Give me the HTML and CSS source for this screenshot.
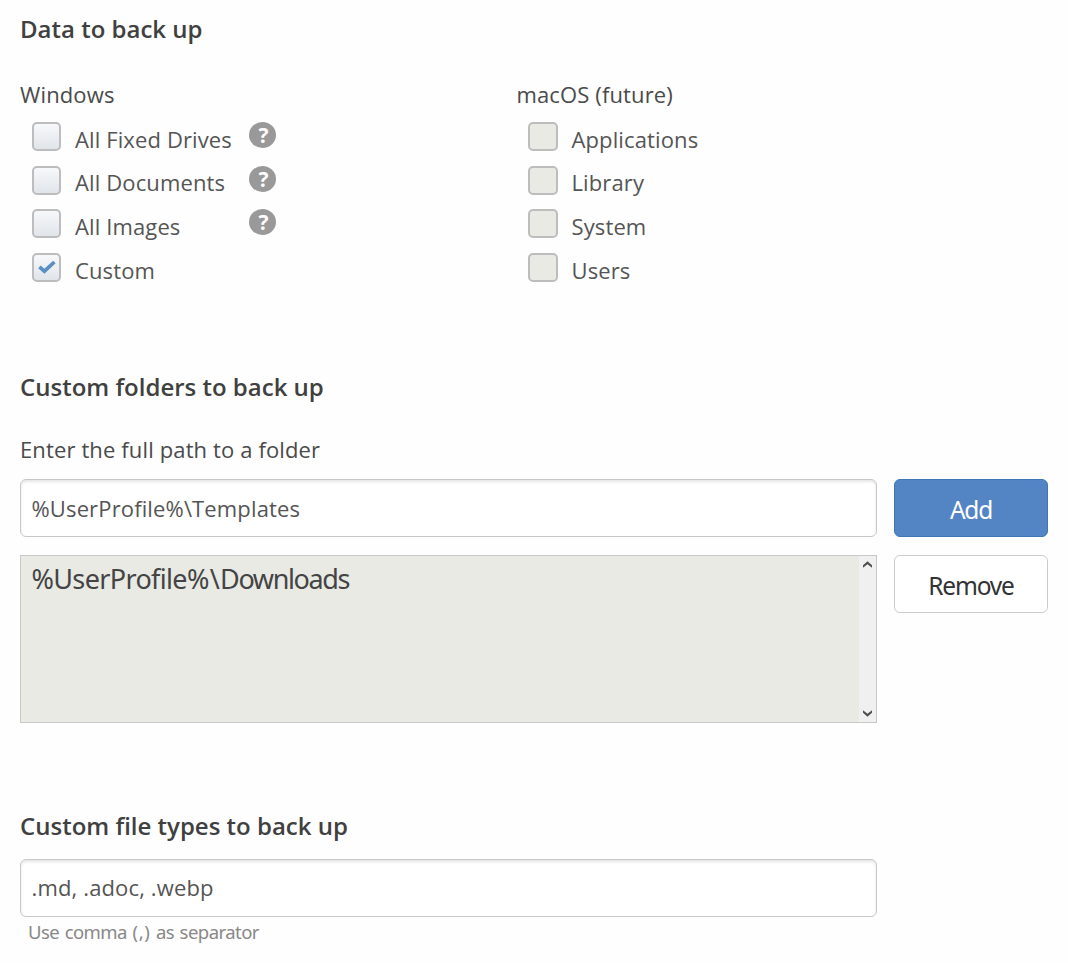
FILE: index.html
```html
<!DOCTYPE html>
<html lang="en">
<head>
<meta charset="utf-8">
<title>Data to back up</title>
<link rel="stylesheet" href="styles.css">
</head>
<body>
<main class="page">
  <section class="data">
    <h2 class="heading">Data to back up</h2>
    <div class="platforms">
      <div class="platform">
        <h3 class="label">Windows</h3>
        <ul class="options">
          <li class="option"><span class="box"></span><span class="name name-wide">All Fixed Drives</span><span class="help">?</span></li>
          <li class="option"><span class="box"></span><span class="name name-wide">All Documents</span><span class="help">?</span></li>
          <li class="option"><span class="box"></span><span class="name name-wide">All Images</span><span class="help">?</span></li>
          <li class="option"><span class="box"><svg class="check" viewBox="0 0 18 14"><path d="M1.400 6.800 6.400 11.200 16.400 2" fill="none" stroke="#5b8fc3" stroke-width="3.700"/></svg></span><span class="name">Custom</span></li>
        </ul>
      </div>
      <div class="platform">
        <h3 class="label label-mac">macOS (future)</h3>
        <ul class="options">
          <li class="option"><span class="box box-off"></span><span class="name">Applications</span></li>
          <li class="option"><span class="box box-off"></span><span class="name">Library</span></li>
          <li class="option"><span class="box box-off"></span><span class="name">System</span></li>
          <li class="option"><span class="box box-off"></span><span class="name">Users</span></li>
        </ul>
      </div>
    </div>
  </section>

  <section class="folders">
    <h2 class="heading">Custom folders to back up</h2>
    <p class="label prompt">Enter the full path to a folder</p>
    <div class="folder-grid">
      <div class="field">%UserProfile%\Templates</div>
      <button class="button button-add">Add</button>
      <div class="list">
        <div class="list-item">%UserProfile%<span class="slash">\</span><span class="leaf">Downloads</span></div>
        <div class="scrollbar">
          <svg class="arrow" viewBox="0 0 10 7"><path d="M0 7V4.200L5 0l5 4.200V7L5 3.200z" fill="#505050"/></svg>
          <svg class="arrow" viewBox="0 0 10 7"><path d="M0 0v2.800L5 7l5-4.200V0L5 3.800z" fill="#505050"/></svg>
        </div>
      </div>
      <button class="button">Remove</button>
    </div>
  </section>

  <section class="types">
    <h2 class="heading heading-types">Custom file types to back up</h2>
    <div class="field field-types">.md, .adoc, .webp</div>
    <p class="hint">Use comma <span class="parens">(,)</span> as separator</p>
  </section>
</main>
</body>
</html>
```

FILE: styles.css
```css
* { box-sizing: border-box; }
body { margin: 0; background: #fefefe; font-family: "Open Sans", "Noto Sans", sans-serif; color: #444; }
.page { width: 1068px; height: 963px; padding: 13px 20px 0; }
.heading { margin: 0; font-size: 24px; line-height: 32px; font-weight: 600; color: #404040; }
.label { margin: 0; font-size: 22px; line-height: 30px; font-weight: 400; letter-spacing: .13px; color: #4a4a4a; }
.label-mac { padding-left: .5px; }

.data { height: 358px; }
.platforms { display: grid; grid-template-columns: 496px 1fr; padding-top: 34px; }
.options { list-style: none; margin: 0; padding: 10px 0 0 12px; }
.option { display: flex; align-items: flex-start; height: 43.67px; padding-top: 2.700px; }
.box {
  display: flex; align-items: center; justify-content: center;
  width: 29px; height: 29px; margin: .2px 14px 0 0;
  border: 2px solid #bdbdbd; border-radius: 5px;
  background: linear-gradient(#f7f8fa, #e0e5ea);
}
.box-off { width: 30px; margin-right: 13.500px; background: #e9eae4; }
.check { width: 18px; height: 14px; }
.name { padding-top: 2px; font-size: 22px; line-height: 30px; letter-spacing: .12px; color: #555; }
.name-wide { width: 174px; }
.help {
  width: 27px; height: 26px; margin-top: .2px; border-radius: 50%; background: #999; color: #fff;
  font-size: 21px; line-height: 26px; font-weight: 700; text-align: center; padding-left: 2px;
}

.folders { height: 439px; }
.prompt { padding-top: 31px; }
.folder-grid { display: grid; grid-template-columns: 857px 154px; gap: 18px 17px; padding-top: 15px; align-items: start; }
.field {
  display: flex; align-items: center; width: 857px; height: 58px; padding: 0 10.500px 1px;
  border: 1px solid #c8c8c8; border-radius: 6px; background: #fff;
  box-shadow: inset 0 2px 3px rgba(0, 0, 0, .1);
  font-size: 22px; letter-spacing: .14px; color: #555;
}
.field-types { padding-bottom: 3px; }
.button {
  height: 58px; padding: 3px 0 0; border: 1px solid #ccc; border-radius: 6px; background: #fff;
  font: 24.500px/34px "Noto Sans", sans-serif; letter-spacing: -1.200px; color: #333;
}
.button-add { border-color: #3f76b6; background: #5385c5; color: #fff; }
.list { display: flex; justify-content: space-between; height: 168px; border: 1px solid #c8c8c8; background: #e9eae4; }
.list-item { padding: 4px 0 0 10.500px; font: 27px/37px "Noto Sans", sans-serif; letter-spacing: -.650px; color: #444; }
.slash { margin: 0 1px 0 1px; }
.leaf { letter-spacing: -1.400px; }
.scrollbar {
  display: flex; flex-direction: column; justify-content: space-between; align-items: center;
  width: 17px; padding: 5px 0; background: #f0f0f0;
}
.arrow { width: 9px; height: 7px; }

.heading-types { height: 49px; }
.hint { margin: 0; padding: 2px 0 0 8px; font: 18.500px/26px "Noto Sans", sans-serif; letter-spacing: -.550px; word-spacing: 1.200px; color: #888; }
.parens { letter-spacing: .7px; }
```
